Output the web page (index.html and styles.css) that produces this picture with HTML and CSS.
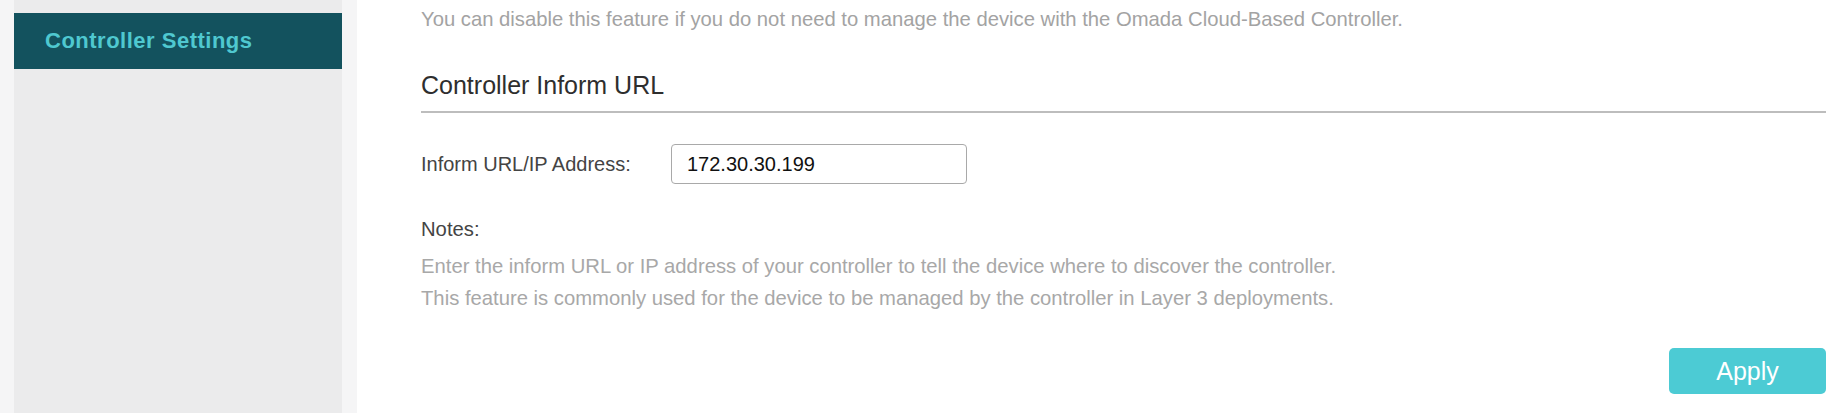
FILE: index.html
```html
<!DOCTYPE html>
<html lang="en">
<head>
<meta charset="utf-8">
<title>Controller Settings</title>
<link rel="stylesheet" href="styles.css">
</head>
<body>
<div class="page">
  <aside class="sidebar">
    <div class="sidebar-inner">
      <div class="nav-item">Controller Settings</div>
    </div>
  </aside>
  <main class="main">
    <p class="desc">You can disable this feature if you do not need to manage the device with the Omada Cloud-Based Controller.</p>
    <h2 class="section-title">Controller Inform URL</h2>
    <div class="form-row">
      <label class="form-label" for="inform">Inform URL/IP Address:</label>
      <input class="text-input" id="inform" type="text" value="172.30.30.199">
    </div>
    <div class="notes">
      <div class="notes-title">Notes:</div>
      <div class="notes-line notes-first">Enter the inform URL or IP address of your controller to tell the device where to discover the controller.</div>
      <div class="notes-line">This feature is commonly used for the device to be managed by the controller in Layer 3 deployments.</div>
    </div>
    <div class="actions">
      <button class="btn-apply" type="button">Apply</button>
    </div>
  </main>
</div>
</body>
</html>
```

FILE: styles.css
```css
html, body {
  margin: 0;
  padding: 0;
  background: #ffffff;
}

body {
  font-family: "Liberation Sans", Arial, sans-serif;
  width: 1842px;
  height: 413px;
  overflow: hidden;
}

.page {
  display: flex;
  height: 413px;
}

.sidebar {
  width: 357px;
  flex: 0 0 357px;
  box-sizing: border-box;
  padding-left: 14px;
  padding-right: 15px;
  background: #f5f5f6;
  height: 100%;
}

.sidebar-inner {
  background: #ebebec;
  height: 100%;
  padding-top: 13px;
  box-sizing: border-box;
}

.nav-item {
  height: 56px;
  background: #13525e;
  color: #4fc8d0;
  font-family: "Liberation Sans", Arial, sans-serif;
  font-weight: 700;
  font-size: 22px;
  letter-spacing: 0.5px;
  display: flex;
  align-items: center;
  padding-left: 31px;
}

.main {
  flex: 1;
  box-sizing: border-box;
  padding: 7px 16px 0 64px;
  display: flex;
  flex-direction: column;
}

.desc {
  margin: 0;
  font-size: 20.25px;
  line-height: 24px;
  color: #a3a3a3;
}

.section-title {
  margin: 39px 0 0 0;
  font-size: 25px;
  font-weight: 400;
  line-height: 30px;
  color: #2e2e2e;
  padding-bottom: 11px;
  border-bottom: 2px solid #bdbdbd;
}

.form-row {
  margin-top: 31px;
  display: flex;
  align-items: center;
  height: 40px;
}

.form-label {
  width: 250px;
  font-size: 20px;
  color: #444444;
}

.text-input {
  box-sizing: border-box;
  width: 296px;
  height: 40px;
  border: 1px solid #a9a9a9;
  border-radius: 4px;
  padding: 0 0 0 15px;
  font-family: "Liberation Sans", Arial, sans-serif;
  font-size: 20px;
  color: #111111;
  background: #ffffff;
  outline: none;
}

.notes {
  margin-top: 30px;
  font-size: 20.25px;
  line-height: 31px;
}

.notes-title {
  color: #444444;
}

.notes-first {
  margin-top: 5px;
}

.notes-line {
  color: #a8a8a8;
  line-height: 32px;
}

.actions {
  margin-top: 34px;
  display: flex;
  justify-content: flex-end;
}

.btn-apply {
  width: 157px;
  height: 46px;
  border: none;
  border-radius: 5px;
  background: #4ccbd4;
  color: #ffffff;
  font-family: "Liberation Sans", Arial, sans-serif;
  font-size: 25px;
  cursor: pointer;
  padding: 0;
}
```
